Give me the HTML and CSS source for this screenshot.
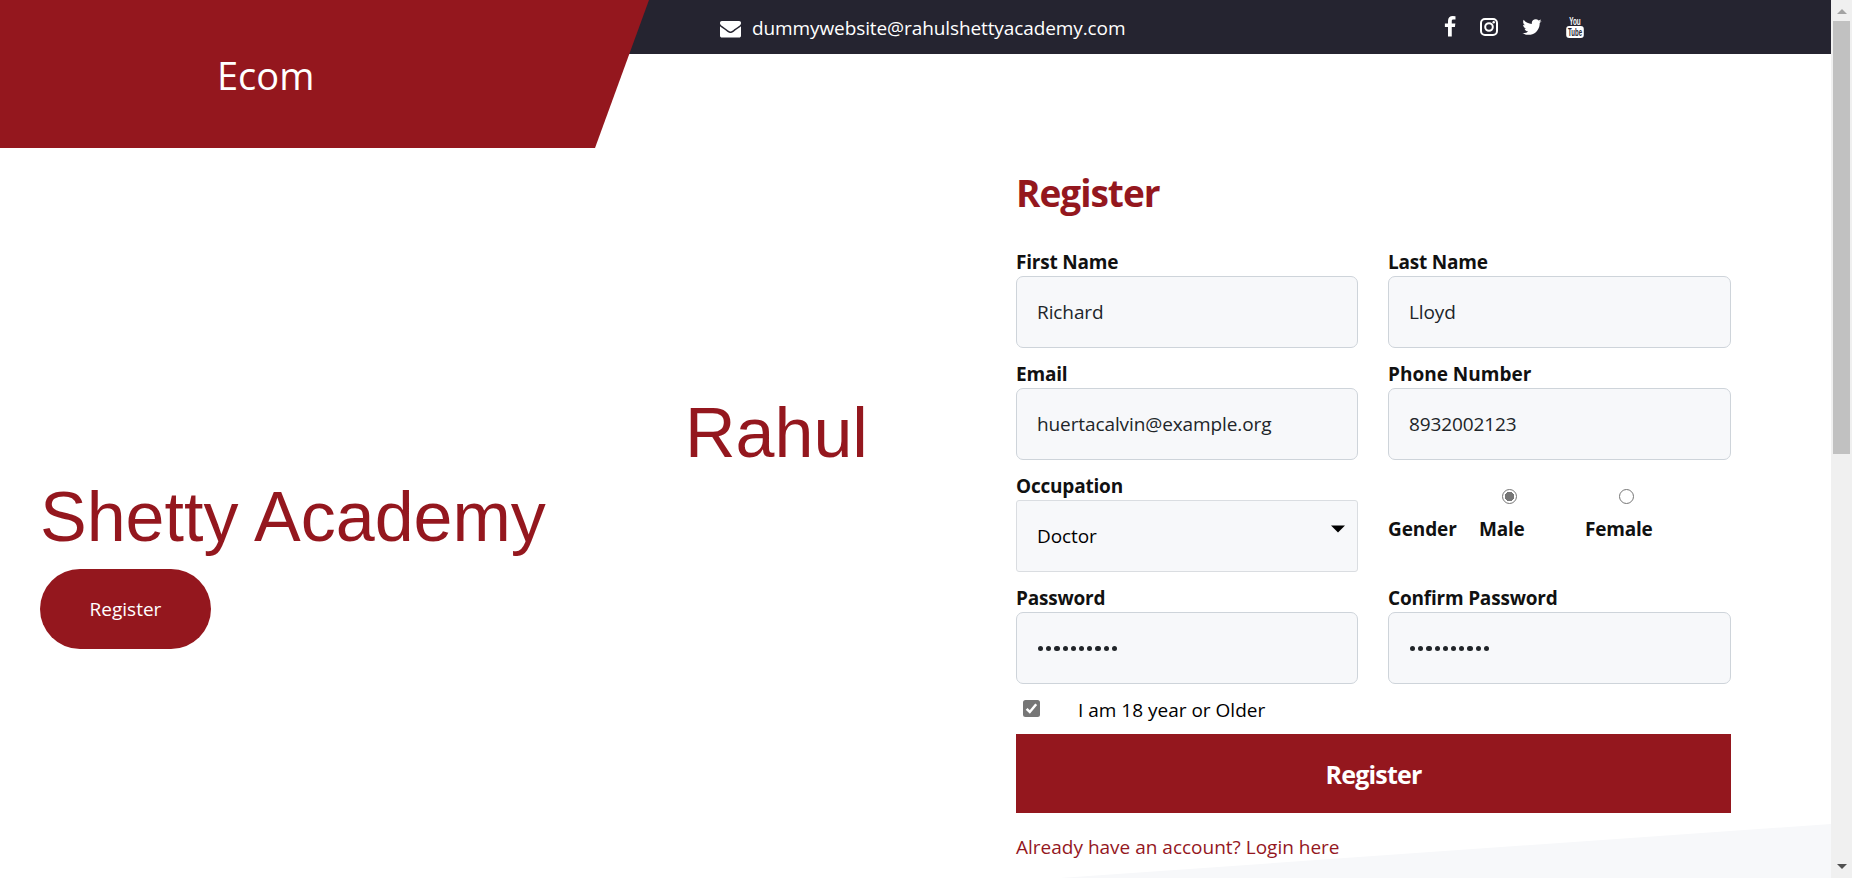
FILE: index.html
```html
<!DOCTYPE html>
<html lang="en">
<head>
<meta charset="utf-8">
<title>Ecom - Register</title>
<link rel="stylesheet" href="styles.css">
</head>
<body>
<div class="page">
  <header class="header">
    <div class="topbar">
      <a class="contact">
        <svg class="icon-mail" viewBox="0 0 1792 1792"><path d="M1792 710v794q0 66-47 113t-113 47h-1472q-66 0-113-47t-47-113v-794q44 49 101 87 362 246 497 345 57 42 92.500 65.500t94.500 48 110 24.500h2q51 0 110-24.500t94.500-48 92.500-65.500q170-123 498-345 57-39 100-87zm0-294q0 79-49 151t-122 123q-376 261-468 325-10 7-42.500 31t-54 38.500-52 32.500-57.500 27-50 9h-2q-23 0-50-9t-57.500-27-52-32.500-54-38.500-42.500-31q-91-64-262-182.500t-205-142.500q-62-42-117-115.500t-55-136.500q0-78 41.500-130t118.500-52h1472q65 0 112.500 47t47.500 113z"/></svg>
        <span class="contact-text">dummywebsite@rahulshettyacademy.com</span>
      </a>
      <nav class="social">
        <svg class="facebook" width="22" height="22" viewBox="0 0 1792 1792"><path d="M1343 12v264h-157q-86 0-116 36t-30 108v189h293l-39 296h-254v759h-306v-759h-255v-296h255v-218q0-186 104-288.500t277-102.500q147 0 228 12z"/></svg>
        <svg width="22" height="22" viewBox="0 0 22 22"><rect class="line" x="3" y="3" width="16" height="16" rx="4"/><circle class="line" cx="11" cy="11" r="3.800"/><circle cx="15.700" cy="6.300" r="1.200"/></svg>
        <svg width="22" height="22" viewBox="0 0 1792 1792"><path d="M1684 408q-67 98-162 167 1 14 1 42 0 130-38 259.500t-115.500 248.500-184.500 210.500-258 146-323 54.500q-271 0-496-145 35 4 78 4 225 0 401-138-105-2-188-64.500t-114-159.500q33 5 61 5 43 0 85-11-112-23-185.500-111.500t-73.500-205.500v-4q68 38 146 41-66-44-105-115t-39-154q0-88 44-163 121 149 294.500 238.500t371.500 99.500q-8-38-8-74 0-134 94.500-228.500t228.500-94.500q140 0 236 102 109-21 205-78-37 115-142 178 93-10 186-50z"/></svg>
        <svg class="youtube" width="22" height="30" viewBox="0 -4 22 30"><text class="yt-you" x="5.200" y="8.800" textLength="11.500" lengthAdjust="spacingAndGlyphs">You</text><rect x="2.200" y="10" width="17.600" height="12" rx="3"/><text class="yt-tube" x="4" y="19.800" textLength="14" lengthAdjust="spacingAndGlyphs">Tube</text></svg>
      </nav>
    </div>
    <div class="brand"><span class="brand-name">Ecom</span></div>
  </header>
  <main class="main">
    <section class="hero">
      <h1 class="hero-title">Rahul Shetty Academy</h1>
      <a class="hero-button"><span>Register</span></a>
    </section>
    <section class="signup">
      <h2 class="title"><span>Register</span></h2>
      <form class="form">
        <div class="field"><label>First Name</label><input class="control" type="text" value="Richard"></div>
        <div class="field"><label>Last Name</label><input class="control" type="text" value="Lloyd"></div>
        <div class="field"><label>Email</label><input class="control" type="text" value="huertacalvin@example.org"></div>
        <div class="field"><label class="loose">Phone Number</label><input class="control" type="text" value="8932002123"></div>
        <div class="field"><label>Occupation</label><div class="control select"><span>Doctor</span><svg class="caret" width="14" height="8" viewBox="0 0 14 8"><path d="M0 .5h14L7 7.500z"/></svg></div></div>
        <div class="gender">
          <span class="gender-title">Gender</span>
          <label class="option male"><i class="radio checked"></i><span>Male</span></label>
          <label class="option female"><i class="radio"></i><span>Female</span></label>
        </div>
        <div class="field"><label>Password</label><div class="control dots"><i></i><i></i><i></i><i></i><i></i><i></i><i></i><i></i><i></i><i></i></div></div>
        <div class="field"><label>Confirm Password</label><div class="control dots"><i></i><i></i><i></i><i></i><i></i><i></i><i></i><i></i><i></i><i></i></div></div>
      </form>
      <div class="consent">
        <svg class="checkbox" width="17" height="17" viewBox="0 0 17 17"><rect width="17" height="17" rx="2.500"/><path d="M3.600 8.800 6.800 12 13.200 4.200"/></svg>
        <span class="consent-text">I am 18 year or Older</span>
      </div>
      <button class="submit" type="button"><span>Register</span></button>
      <a class="login"><span>Already have an account? Login here</span></a>
    </section>
  </main>
</div>
<aside class="scrollbar">
  <svg class="arrow up" width="10" height="6" viewBox="0 0 10 6"><path d="M5 0 10 5H0z"/></svg>
  <div class="thumb"></div>
  <svg class="arrow down" width="10" height="6" viewBox="0 0 10 6"><path d="M0 0h10L5 5z"/></svg>
</aside>
</body>
</html>
```
FILE: styles.css
```css
* { box-sizing: border-box; }
body {
  margin: 0;
  display: flex;
  height: 878px;
  overflow: hidden;
  background: #fff;
  color: #111;
  font-family: "Open Sans", "Noto Sans", sans-serif;
  font-size: 19px;
}
.page { position: relative; width: 1831px; height: 878px; overflow: hidden; }
.page::before {
  content: "";
  position: absolute;
  inset: 824px 0 0 1060px;
  background: #f7f8fa;
  clip-path: polygon(0 100%, 100% 0, 100% 100%);
}
.header { position: relative; height: 148px; }
.topbar {
  display: flex;
  height: 54px;
  padding-left: 720px;
  background: #252430;
  color: #fff;
  fill: #fff;
}
.contact { display: flex; align-items: center; width: 719px; padding-top: 2px; }
.icon-mail { width: 21px; height: 21px; margin-right: 11px; }
.contact-text { letter-spacing: -0.1px; white-space: nowrap; }
.social { display: flex; align-items: center; gap: 21px; }
.facebook { margin-right: -4px; }
.line { fill: none; stroke: #fff; stroke-width: 2; }
.youtube { overflow: visible; }
.yt-you, .yt-tube { font: bold 11px "Liberation Sans", sans-serif; }
.yt-tube { fill: #252430; font-size: 10px; }
.brand {
  position: absolute;
  inset: 0 auto 0 0;
  width: 649px;
  padding: 47px 0 0 217px;
  background: #94171e;
  clip-path: polygon(0 0, 100% 0, 595px 100%, 0 100%);
  color: #fff;
  font-size: 38px;
  line-height: 56px;
}
.main { position: relative; display: flex; padding-left: 40px; }
.hero { width: 976px; padding-top: 243px; }
.hero-title {
  width: 860px;
  margin: 0 0 10px;
  color: #94171e;
  font: 400 70px/84px "Liberation Sans", Arial, sans-serif;
  text-indent: 645px;
}
.hero-button {
  display: flex;
  align-items: center;
  justify-content: center;
  width: 171px;
  height: 80px;
  border-radius: 40px;
  background: #94171e;
  color: #fff;
}
.signup { width: 715px; padding-top: 18px; }
.title { height: 82px; margin: 0; color: #94171e; font-size: 37px; letter-spacing: -1px; line-height: 54px; }
.form { display: grid; grid-template-columns: 342px 343px; gap: 12px 30px; }
.field { height: 100px; }
.field label { display: block; height: 28px; font-weight: 700; letter-spacing: -0.2px; line-height: 28px; }
.field .loose { letter-spacing: 0; }
.control {
  display: block;
  width: 100%;
  height: 72px;
  padding: 0 20px;
  border: 1px solid #ced4da;
  border-radius: 7px;
  background: #f7f8fa;
  color: #212529;
  font: 400 19px "Open Sans", "Noto Sans", sans-serif;
  letter-spacing: -0.1px;
}
.select { display: flex; align-items: center; justify-content: space-between; padding-right: 12px; border-color: #dadde1; border-radius: 3px; color: #000; }
.caret { margin-bottom: 15px; }
.dots { display: flex; align-items: center; gap: 3px; padding: 1px 0 0 21px; }
.dots i { width: 5.200px; height: 5.200px; border-radius: 50%; background: #212529; }
.gender { display: flex; height: 100px; padding-top: 17px; font-weight: 700; line-height: 27px; }
.gender-title { width: 91px; padding-top: 27px; letter-spacing: -0.1px; }
.option { display: flex; flex-direction: column; }
.option span { padding-top: 12px; letter-spacing: -0.2px; }
.male { width: 106px; }
.radio { width: 15px; height: 15px; margin-left: 23px; border: 1px solid #767676; border-radius: 50%; background: #fff; }
.female .radio { margin-left: 34px; }
.checked { background: radial-gradient(circle, #767676 4.500px, #fff 5px); }
.consent { display: flex; height: 50px; padding: 16px 0 0 7px; color: #000; }
.checkbox { margin-right: 38px; fill: #767676; }
.checkbox path { fill: none; stroke: #fff; stroke-width: 2.500; }
.consent-text { line-height: 20px; }
.submit {
  display: block;
  width: 100%;
  height: 79px;
  padding: 1px 0 0;
  border: 0;
  background: #94171e;
  color: #fff;
  font: 700 25px "Open Sans", "Noto Sans", sans-serif;
  letter-spacing: -0.8px;
}
.login { display: block; margin-top: 21px; color: #94171e; line-height: 26px; }
.scrollbar {
  display: flex;
  flex-direction: column;
  align-items: center;
  width: 21px;
  height: 878px;
  padding: 9px 2px;
  background: #f0f0f0;
}
.arrow { flex: none; }
.up { fill: #a3a3a3; }
.down { margin-top: auto; margin-bottom: -1px; fill: #505050; }
.thumb { width: 17px; height: 433px; margin-top: 6px; background: #c1c1c1; }
```
